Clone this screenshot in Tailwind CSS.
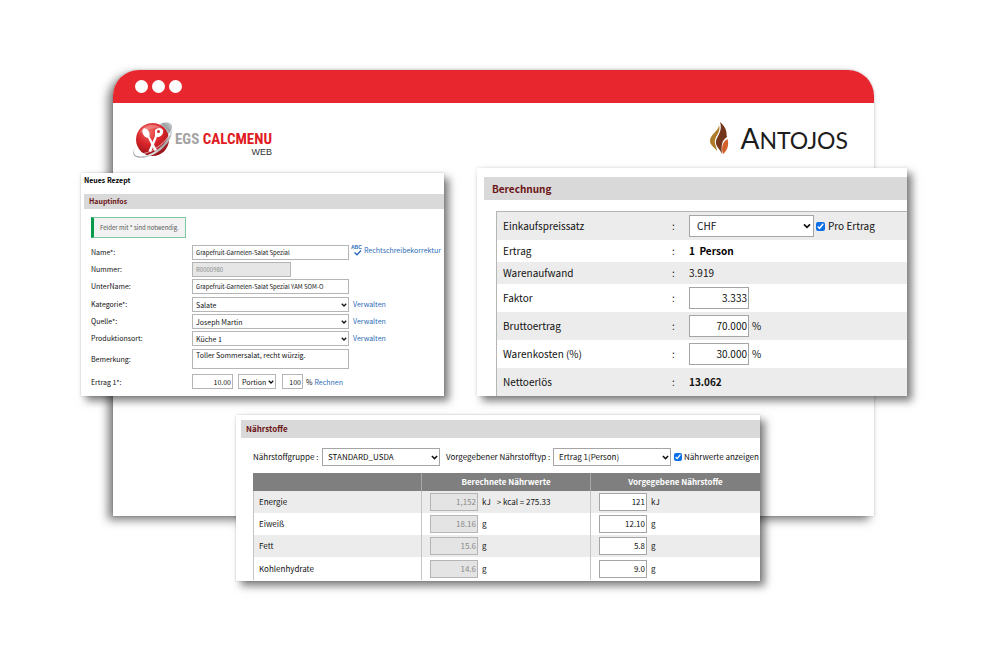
<!DOCTYPE html>
<html lang="de">
<head>
<meta charset="utf-8">
<meta name="viewport" content="width=device-width, initial-scale=1">
<title>EGS CALCMENU Web – Rezept</title>
<script src="https://cdn.jsdelivr.net/npm/@tailwindcss/browser@4"></script>
</head>
<body class="bg-white font-['Noto_Sans_CJK_SC','Noto_Sans',sans-serif] text-[#111]">
<svg class="hidden" aria-hidden="true">
  <symbol id="chevron" viewBox="0 0 8 8"><path d="M1 2.3 4 5.3 7 2.3" fill="none" stroke="#111" stroke-width="1.7"/></symbol>
</svg>
<main class="relative mx-auto min-h-screen max-w-[998px] overflow-hidden">

  <!-- Browser window -->
  <section class="absolute left-[113px] right-[124px] top-[70px] min-h-[446px] rounded-t-[26px] bg-white shadow-[-5px_4px_10px_rgba(0,0,0,0.5),0_0_2px_rgba(0,0,0,0.25)]">
    <div class="flex h-[33px] items-center gap-1 rounded-t-[26px] bg-[#e8262e] px-[22px]">
      <span class="size-[13px] rounded-full bg-white"></span>
      <span class="size-[13px] rounded-full bg-white"></span>
      <span class="size-[13px] rounded-full bg-white"></span>
    </div>
    <header class="flex items-start justify-between pl-5 pr-[26px] pt-[18px]">
      <a href="#" class="flex items-start gap-[2px]" aria-label="EGS Calcmenu Web">
        <svg class="h-[37px] w-[40px]" viewBox="0 0 40 37">
          <defs>
            <radialGradient id="ball" cx=".4" cy=".25" r=".8"><stop offset="0" stop-color="#ef6a62"/><stop offset=".5" stop-color="#d9252b"/><stop offset="1" stop-color="#8f1014"/></radialGradient>
            <linearGradient id="ring" x1="0" y1="1" x2="1" y2="0"><stop offset="0" stop-color="#8b9094"/><stop offset=".3" stop-color="#dfe2e4"/><stop offset=".6" stop-color="#9a9fa3"/><stop offset="1" stop-color="#d5d8da"/></linearGradient>
          </defs>
          <path d="M27 3C34 0 40 2 39 7C38 10 36 13 33 16L30 10Z" fill="url(#ring)"/>
          <circle cx="19.500" cy="18.500" r="16.500" fill="url(#ball)"/>
          <path d="M6 13Q9 5 18 4Q27 3 31 10Q24 6 17 8Q10 9 6 13Z" fill="#fff" opacity=".25"/>
          <g fill="#fff">
            <ellipse cx="13" cy="12" rx="3.200" ry="5" transform="rotate(-28 13 12)"/>
            <path d="M14 15L16 14.500 24 29 21.500 30Z"/>
            <path d="M22 9Q27 5 30 9Q31 14 26 16L24 16 18 31 15.500 30 22 15Z"/>
          </g>
          <circle cx="25.500" cy="10.500" r="1.500" fill="#c8242a"/>
          <path d="M5 24C-1 29-1 36 8 35.500C19 35 35 23 38.500 8C40 14 37 20 31 26C23 34 12 38 5 36.500C-2 35-1 29 5 24Z" fill="url(#ring)"/>
          <path d="M3 31C5 36 26 31 37 13" fill="none" stroke="#fff" stroke-width=".8" opacity=".8"/>
        </svg>
        <span class="flex flex-col items-end pt-[9px] font-['Liberation_Sans_Narrow','Roboto_Condensed','Roboto',sans-serif]">
          <span class="text-[15px] font-bold leading-[18px]"><span class="text-[#a3a3a3]">EGS</span> <span class="text-[#e01b24]">CALCMENU</span></span>
          <span class="font-['Liberation_Sans',sans-serif] text-[9px] leading-[9px] text-[#333]">WEB</span>
        </span>
      </a>
      <a href="#" class="flex items-start gap-[11px]" aria-label="Antojos">
        <svg class="mt-px h-[33px] w-[20px]" viewBox="0 0 20 33">
          <path d="M10 3C10 9 1 12 1 19C1 23 5 25 8 29C8 25 5 22 6 18C7 13 12 10 10 3Z" fill="#ad7b2b"/>
          <path d="M11 0C19 7 17 11 18 15C13 18 12 23 13 32C11 27 6 24 7 19C8 14 14 9 11 0Z" fill="#74361a"/>
          <path d="M18.500 17C20 22 19 28 14 32C12 26 13 20 18.500 17Z" fill="#d2602a"/>
        </svg>
        <span class="pt-[3px] font-['Lato',sans-serif] text-[23px] leading-[28px] text-[#1c1c1c]"><span class="text-[28px]">A</span>NTOJOS</span>
      </a>
    </header>
  </section>

  <!-- Recipe form -->
  <section class="absolute left-[81px] top-[173px] w-[363px] bg-white pb-[7px] pl-[3px] text-[7px] leading-[14px] shadow-[5px_5px_8px_rgba(0,0,0,0.5),0_0_2px_rgba(0,0,0,0.2)]">
    <h1 class="pb-[6px] font-bold leading-[15px] text-black">Neues Rezept</h1>
    <h2 class="bg-[#d9d9d9] px-[5px] font-bold leading-[15px] text-[#6b1414]">Hauptinfos</h2>
    <form class="px-[7px] pt-2">
      <p class="w-fit border border-l-3 border-[#7cc8a0] border-l-[#0a9a4c] bg-[#f2f2f2] px-[6px] text-[6px] leading-[19px] text-[#555]">Felder mit * sind notwendig.</p>
      <div class="grid grid-cols-[101px_157px_1fr] gap-y-[2px] pt-[7px]">
        <label for="name">Name*:</label>
        <input id="name" class="h-[15px] border border-[#b5b5b5] px-[3px] text-[6px]" value="Grapefruit-Garnelen-Salat Spezial">
        <a href="#" class="flex h-[10px] items-center gap-[2px] pl-[2px] text-[#2b6cb8]">
          <svg class="h-[11px] w-[11px]" viewBox="0 0 11 11" role="img" aria-label="ABC"><text x="0" y="4" font-size="5" font-weight="700" font-family="Liberation Sans" fill="#2b6cb8">ABC</text><path d="M3.500 7.500 6 9.800 10 5.500" fill="none" stroke="#2b6cb8" stroke-width="1.400"/></svg>
          Rechtschreibekorrektur</a>
        <label for="nr">Nummer:</label>
        <input id="nr" class="col-span-2 h-[15px] w-[99px] border border-[#b5b5b5] bg-[#e6e6e6] px-[3px] text-[6px] text-[#8a8a8a]" value="R0000980" disabled>
        <label for="uname">UnterName:</label>
        <input id="uname" class="h-[15px] border border-[#b5b5b5] px-[3px] text-[6px]" value="Grapefruit-Garnelen-Salat Spezial YAM SOM-O">
      </div>
      <div class="grid grid-cols-[101px_157px_1fr] gap-y-[2px] pt-[3px]">
        <label for="kat">Kategorie*:</label>
        <span class="relative flex"><select id="kat" class="h-[15px] w-full appearance-none border border-[#b5b5b5] bg-white px-[3px]"><option>Salate</option></select><svg class="pointer-events-none absolute right-[2px] top-[5px] size-[6px]"><use href="#chevron"/></svg></span>
        <a href="#" class="pl-1 text-[#2b6cb8]">Verwalten</a>
        <label for="quelle">Quelle*:</label>
        <span class="relative flex"><select id="quelle" class="h-[15px] w-full appearance-none border border-[#b5b5b5] bg-white px-[3px]"><option>Joseph Martin</option></select><svg class="pointer-events-none absolute right-[2px] top-[5px] size-[6px]"><use href="#chevron"/></svg></span>
        <a href="#" class="pl-1 text-[#2b6cb8]">Verwalten</a>
        <label for="ort">Produktionsort:</label>
        <span class="relative flex"><select id="ort" class="h-[15px] w-full appearance-none border border-[#b5b5b5] bg-white px-[3px]"><option>Küche 1</option></select><svg class="pointer-events-none absolute right-[2px] top-[5px] size-[6px]"><use href="#chevron"/></svg></span>
        <a href="#" class="pl-1 text-[#2b6cb8]">Verwalten</a>
      </div>
      <div class="grid grid-cols-[101px_157px_1fr] items-center gap-y-[5px] pt-[3px]">
        <label for="bem">Bemerkung:</label>
        <textarea id="bem" class="h-5 resize-none overflow-hidden border border-[#b5b5b5] px-[3px] leading-[10px]">Toller Sommersalat, recht würzig.</textarea>
        <span></span>
        <label for="ertrag">Ertrag 1*:</label>
        <div class="col-span-2 flex items-center">
          <input id="ertrag" class="h-[15px] w-[41px] border border-[#b5b5b5] px-px text-right" value="10.00">
          <span class="relative ml-[5px] flex"><select aria-label="Einheit" class="h-[15px] w-[38px] appearance-none border border-[#b5b5b5] bg-white px-[3px]"><option>Portion</option></select><svg class="pointer-events-none absolute right-[2px] top-[5px] size-[6px]"><use href="#chevron"/></svg></span>
          <input aria-label="Prozent" class="ml-[6px] h-[15px] w-[21px] border border-[#b5b5b5] px-px text-right" value="100">
          <span class="ml-[3px]">%</span>
          <a href="#" class="ml-[2px] text-[#2b6cb8]">Rechnen</a>
        </div>
      </div>
    </form>
  </section>

  <!-- Price calculation -->
  <section class="absolute left-[477px] top-[168px] w-[430px] bg-white pl-[7px] pt-[9px] text-[10px] leading-[14px] shadow-[5px_5px_8px_rgba(0,0,0,0.5),0_0_3px_rgba(0,0,0,0.1)]">
    <h2 class="bg-[#d9d9d9] px-2 font-bold leading-[23px] text-[#6b1414]">Berechnung</h2>
    <div class="pl-3 pt-[11px]">
      <table class="w-full border-separate border-spacing-0 border-l border-t border-[#b5b5b5] text-left">
        <tbody>
          <tr class="h-[28px] bg-[#ececec]"><th class="w-[168px] p-0 pl-[6px] font-normal"><label for="satz">Einkaufspreissatz</label></th><td class="w-[24px] p-0 pl-[7px]">:</td><td class="p-0"><div class="flex items-center"><span class="relative flex"><select id="satz" class="h-[22px] w-[125px] appearance-none border border-[#a5a5a5] bg-white px-[7px]"><option>CHF</option></select><svg class="pointer-events-none absolute right-[3px] top-[7px] size-[8px]"><use href="#chevron"/></svg></span><input id="pro" type="checkbox" checked class="ml-[2px] size-[9px] accent-[#0b6fe8]"><label for="pro" class="ml-[3px]">Pro Ertrag</label></div></td></tr>
          <tr class="h-[22px]"><th class="p-0 pl-[6px] font-normal">Ertrag</th><td class="p-0 pl-[7px]">:</td><td class="p-0 font-bold text-black">1&nbsp; Person</td></tr>
          <tr class="h-[22px] bg-[#ececec]"><th class="p-0 pl-[6px] font-normal">Warenaufwand</th><td class="p-0 pl-[7px]">:</td><td class="p-0">3.919</td></tr>
          <tr class="h-[28px]"><th class="p-0 pl-[6px] font-normal"><label for="faktor">Faktor</label></th><td class="p-0 pl-[7px]">:</td><td class="p-0"><div class="flex items-center"><input id="faktor" class="h-[22px] w-[60px] border border-[#a5a5a5] bg-white px-px pb-px text-right" value="3.333"></div></td></tr>
          <tr class="h-[28px] bg-[#ececec]"><th class="p-0 pl-[6px] font-normal"><label for="brutto">Bruttoertrag</label></th><td class="p-0 pl-[7px]">:</td><td class="p-0"><div class="flex items-center gap-[3px]"><input id="brutto" class="h-[22px] w-[60px] border border-[#a5a5a5] bg-white px-px pb-px text-right" value="70.000">%</div></td></tr>
          <tr class="h-[28px]"><th class="p-0 pl-[6px] font-normal"><label for="kosten">Warenkosten (%)</label></th><td class="p-0 pl-[7px]">:</td><td class="p-0"><div class="flex items-center gap-[3px]"><input id="kosten" class="h-[22px] w-[60px] border border-[#a5a5a5] bg-white px-px pb-px text-right" value="30.000">%</div></td></tr>
          <tr class="h-[28px] bg-[#ececec]"><th class="p-0 pl-[6px] font-normal">Nettoerlös</th><td class="p-0 pl-[7px]">:</td><td class="p-0 font-bold">13.062</td></tr>
        </tbody>
      </table>
    </div>
  </section>

  <!-- Nutrients -->
  <section class="absolute left-[236px] top-[415px] w-[524px] bg-white pb-px pl-[5px] pt-[5px] text-[8px] shadow-[5px_5px_8px_rgba(0,0,0,0.5),0_0_2px_rgba(0,0,0,0.2)]">
    <h2 class="bg-[#d9d9d9] px-[5px] font-bold leading-[18px] text-[#6b1414]">Nährstoffe</h2>
    <div class="flex items-center whitespace-nowrap pb-[7px] pl-3 pt-[10px]">
      <label for="gruppe" class="w-[69px]">Nährstoffgruppe :</label>
      <span class="relative flex"><select id="gruppe" class="h-[18px] w-[118px] appearance-none border border-[#a5a5a5] bg-white px-[5px]"><option>STANDARD_USDA</option></select><svg class="pointer-events-none absolute right-[2px] top-[6px] size-[7px]"><use href="#chevron"/></svg></span>
      <label for="typ" class="ml-[6px] w-[107px]">Vorgegebener Nährstofftyp :</label>
      <span class="relative flex"><select id="typ" class="h-[18px] w-[118px] appearance-none border border-[#a5a5a5] bg-white px-[5px]"><option>Ertrag 1(Person)</option></select><svg class="pointer-events-none absolute right-[2px] top-[6px] size-[7px]"><use href="#chevron"/></svg></span>
      <input id="zeigen" type="checkbox" checked class="ml-[3px] size-[8px] accent-[#0b6fe8]"><label for="zeigen" class="ml-[2px]">Nährwerte anzeigen</label>
    </div>
    <div class="pl-3">
      <table class="w-full table-fixed border-separate border-spacing-0 text-left">
        <thead>
          <tr class="h-[18px] bg-[#7f7f7f] text-white"><th class="w-[168px] border-l border-[#7f7f7f] p-0"></th><th class="w-[169px] border-l border-[#a8a8a8] p-0 text-center">Berechnete Nährwerte</th><th class="border-l border-[#a8a8a8] p-0 text-center">Vorgegebene Nährstoffe</th></tr>
        </thead>
        <tbody>
          <tr class="h-[22px] bg-[#ececec]"><th class="border-l border-[#c4c4c4] p-0 pl-[5px] font-normal">Energie</th><td class="border-l border-[#c4c4c4] p-0 pl-2"><div class="flex items-center gap-[4px]"><input aria-label="Energie berechnet" disabled class="h-[18px] w-[48px] border border-[#b5b5b5] bg-[#e4e4e4] px-px pb-px text-right text-[#8a8a8a]" value="1,152">kJ <span class="ml-[2px]">&gt; kcal = 275.33</span></div></td><td class="border-l border-[#c4c4c4] p-0 pl-2"><div class="flex items-center gap-[4px]"><input aria-label="Energie vorgegeben" class="h-[18px] w-[48px] border border-[#a5a5a5] bg-white px-px pb-px text-right" value="121">kJ</div></td></tr>
          <tr class="h-[22px]"><th class="border-l border-[#c4c4c4] p-0 pl-[5px] font-normal">Eiweiß</th><td class="border-l border-[#c4c4c4] p-0 pl-2"><div class="flex items-center gap-[4px]"><input aria-label="Eiweiß berechnet" disabled class="h-[18px] w-[48px] border border-[#b5b5b5] bg-[#e4e4e4] px-px pb-px text-right text-[#8a8a8a]" value="18.16">g</div></td><td class="border-l border-[#c4c4c4] p-0 pl-2"><div class="flex items-center gap-[4px]"><input aria-label="Eiweiß vorgegeben" class="h-[18px] w-[48px] border border-[#a5a5a5] bg-white px-px pb-px text-right" value="12.10">g</div></td></tr>
          <tr class="h-[22px] bg-[#ececec]"><th class="border-l border-[#c4c4c4] p-0 pl-[5px] font-normal">Fett</th><td class="border-l border-[#c4c4c4] p-0 pl-2"><div class="flex items-center gap-[4px]"><input aria-label="Fett berechnet" disabled class="h-[18px] w-[48px] border border-[#b5b5b5] bg-[#e4e4e4] px-px pb-px text-right text-[#8a8a8a]" value="15.6">g</div></td><td class="border-l border-[#c4c4c4] p-0 pl-2"><div class="flex items-center gap-[4px]"><input aria-label="Fett vorgegeben" class="h-[18px] w-[48px] border border-[#a5a5a5] bg-white px-px pb-px text-right" value="5.8">g</div></td></tr>
          <tr class="h-[23px]"><th class="border-l border-[#c4c4c4] p-0 pl-[5px] font-normal">Kohlenhydrate</th><td class="border-l border-[#c4c4c4] p-0 pl-2"><div class="flex items-center gap-[4px]"><input aria-label="Kohlenhydrate berechnet" disabled class="h-[18px] w-[48px] border border-[#b5b5b5] bg-[#e4e4e4] px-px pb-px text-right text-[#8a8a8a]" value="14.6">g</div></td><td class="border-l border-[#c4c4c4] p-0 pl-2"><div class="flex items-center gap-[4px]"><input aria-label="Kohlenhydrate vorgegeben" class="h-[18px] w-[48px] border border-[#a5a5a5] bg-white px-px pb-px text-right" value="9.0">g</div></td></tr>
        </tbody>
      </table>
    </div>
  </section>
</main>
</body>
</html>
